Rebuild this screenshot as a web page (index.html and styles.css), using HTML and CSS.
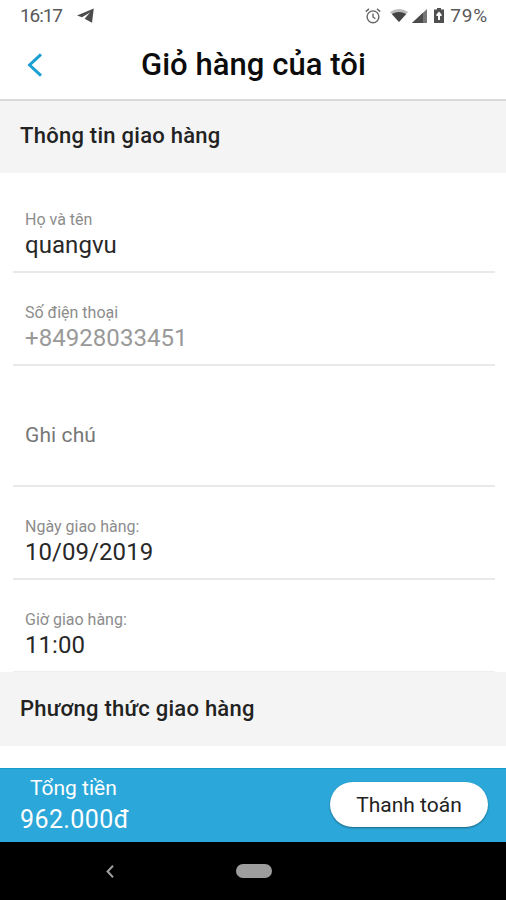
FILE: index.html
```html
<!DOCTYPE html>
<html lang="vi">
<head>
    <meta charset="UTF-8">
    <meta name="viewport" content="width=device-width, initial-scale=1.0">
    <title>Giỏ hàng của tôi</title>
    <link rel="stylesheet" href="styles.css">
</head>
<body>
    <!-- Status bar -->
    <div class="status-bar">
        <span class="status-time">16:17</span>
        <svg class="icon-telegram" width="17" height="15" viewBox="0 0 17 15">
            <path d="M0 7.6 16.8 0.4 15 14.8 7.6 10.8 13 4.6 5 9.2Z" fill="#4c4c4c"/>
        </svg>
        <div class="status-icons">
            <svg class="icon-alarm" width="16" height="16" viewBox="0 0 16 16" fill="none" stroke="#666" stroke-width="1.4">
                <circle cx="8" cy="8.8" r="5.9"/>
                <path d="M0.8 3.6 4 0.9M15.2 3.6 12 0.9M8 5.4V9l2.4 1.7"/>
            </svg>
            <svg class="icon-wifi" width="18" height="13" viewBox="0 0 18 13">
                <path d="M0 3Q9-3 18 3L9 13Z" fill="#bbb"/>
                <path d="M1.8 5Q9 1.2 16.2 5L9 13Z" fill="#444"/>
            </svg>
            <svg class="icon-signal" width="15" height="14" viewBox="0 0 15 14">
                <path d="M15 0V14H0Z" fill="#777"/>
                <path d="M11 3.7V14H0Z" fill="#4c4c4c"/>
            </svg>
            <svg class="icon-battery" width="10" height="15" viewBox="0 0 10 15">
                <path d="M3 0H7V1.6H10V15H0V1.6H3Z" fill="#505050"/>
                <path d="M5 3.4 7.6 6.4V8H6V12H4V8H2.4V6.4Z" fill="#fff"/>
            </svg>
            <span class="status-percent">79%</span>
        </div>
    </div>

    <!-- Header -->
    <header class="header">
        <a href="#" class="back-link">
            <svg width="17" height="24" viewBox="0 0 17 24" fill="none" stroke="#1b9fd3" stroke-width="3">
                <path d="M15 1.4 3.6 12 15 22.6"/>
            </svg>
        </a>
        <h1 class="header-title">Giỏ hàng của tôi</h1>
    </header>

    <main class="content">
        <h2 class="section-title">Thông tin giao hàng</h2>

        <div class="form">
            <div class="form-group form-group-first">
                <span class="form-label">Họ và tên</span>
                <span class="form-value">quangvu</span>
            </div>
            <div class="form-group">
                <span class="form-label">Số điện thoại</span>
                <span class="form-value value-phone">+84928033451</span>
            </div>
            <div class="form-group form-group-note">
                <span class="form-placeholder">Ghi chú</span>
            </div>
            <div class="form-group">
                <span class="form-label">Ngày giao hàng:</span>
                <span class="form-value">10/09/2019</span>
            </div>
            <div class="form-group form-group-last">
                <span class="form-label">Giờ giao hàng:</span>
                <span class="form-value">11:00</span>
            </div>
        </div>

        <h2 class="section-title section-method">Phương thức giao hàng</h2>
    </main>

    <!-- Total and checkout -->
    <div class="checkout-bar">
        <div class="total">
            <span class="total-label">Tổng tiền</span>
            <span class="total-value">962.000đ</span>
        </div>
        <button type="button" class="checkout-button">Thanh toán</button>
    </div>

    <!-- Android navigation -->
    <div class="nav-bar">
        <svg class="nav-back" width="8" height="13" viewBox="0 0 8 13" fill="none" stroke="#a0a0a0" stroke-width="2">
            <path d="M7 0.8 1.6 6.5 7 12.2"/>
        </svg>
        <div class="nav-home"></div>
    </div>
</body>
</html>
```
FILE: styles.css
```css
* {
    margin: 0;
    padding: 0;
    box-sizing: border-box;
    font-family: Roboto, 'Liberation Sans', sans-serif;
}

body {
    display: flex;
    flex-direction: column;
    height: 900px;
    background-color: #fff;
    overflow: hidden;
}

.status-bar {
    display: flex;
    align-items: center;
    height: 32px;
    padding: 0 18px 1px 20px;
    color: #5a5a5a;
    font-size: 19px;
}

.status-time {
    width: 57px;
    letter-spacing: -1.1px;
}

.status-percent {
    letter-spacing: 0.8px;
}

.status-icons {
    display: flex;
    align-items: center;
    margin-left: auto;
}

.icon-wifi {
    margin-left: 9px;
}

.icon-signal {
    margin-left: 4px;
}

.icon-battery {
    margin: 0 6px 0 7px;
}

.header {
    display: flex;
    align-items: center;
    height: 69px;
    padding: 0 100px 2px 26px;
    border-bottom: 2px solid #dadada;
}

.back-link {
    display: flex;
    width: 115px;
}

.header-title {
    font-size: 31px;
    font-weight: 500;
    line-height: 40px;
    letter-spacing: 0.05px;
    color: #0c0c0c;
    white-space: nowrap;
}

.content {
    display: flex;
    flex-direction: column;
    flex: 1;
}

.section-title {
    height: 72px;
    padding-left: 20px;
    background-color: #f4f4f4;
    font-size: 22px;
    font-weight: 500;
    line-height: 70px;
    letter-spacing: 0.26px;
    color: #222;
}

.section-method {
    height: 74px;
    line-height: 73px;
}

.form {
    padding: 0 11px 0 13px;
}

.form-group {
    display: flex;
    flex-direction: column;
    height: 93px;
    padding: 29px 12px 0;
    border-bottom: 2px solid #e9e9e9;
}

.form-group-first {
    height: 100px;
    padding-top: 36px;
}

.form-group-note {
    height: 121px;
    padding-top: 55px;
}

.form-group-last {
    height: 92px;
    border-bottom: 1px solid #eee;
}

.form-label {
    font-size: 16px;
    line-height: 22px;
    color: #8c8c8c;
}

.form-value {
    font-size: 24px;
    line-height: 29px;
    letter-spacing: 0.05px;
    color: #282828;
}

.value-phone {
    color: #999;
}

.form-placeholder {
    font-size: 21px;
    line-height: 28px;
    letter-spacing: 0.1px;
    color: #777;
}

.checkout-bar {
    display: flex;
    justify-content: space-between;
    height: 74px;
    padding: 0 18px 0 20px;
    background-color: #2ba7d9;
    border-top: 1px solid #159bcb;
}

.total {
    display: flex;
    flex-direction: column;
    color: #fff;
}

.total-label {
    margin: 4px 0 0 10px;
    font-size: 21px;
    line-height: 30px;
}

.total-value {
    font-size: 25px;
    line-height: 34px;
    letter-spacing: 0.4px;
}

.checkout-button {
    width: 158px;
    height: 45px;
    margin-top: 13px;
    background-color: #fff;
    border: none;
    border-radius: 23px;
    box-shadow: 0 1px 2px rgba(0, 0, 0, 0.4);
    font-size: 21px;
    color: #222;
}

.nav-bar {
    display: flex;
    align-items: center;
    height: 58px;
    padding-left: 106px;
    background-color: #000;
}

.nav-home {
    width: 36px;
    height: 14px;
    margin-left: 122px;
    background-color: #9d9d9d;
    border-radius: 7px;
}
```
